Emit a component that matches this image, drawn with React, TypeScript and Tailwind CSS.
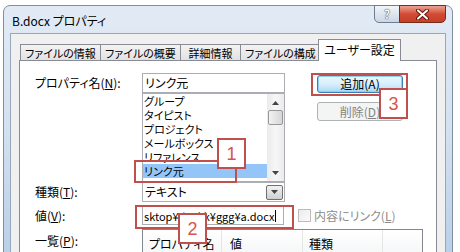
import React from "react";

const FONT = "font-['Noto_Sans_CJK_JP',sans-serif] [font-feature-settings:'palt']";
const RED = "border-[#c0504d]";

function Key({ k }: { k: string }) {
  return <span className="underline underline-offset-1">{k}</span>;
}

function Tab({ label, w, active }: { label: string; w: string; active?: boolean }) {
  if (active) {
    return (
      <div className={`${w} -ml-[3px] h-[22px] border-t border-l border-r border-[#898c95] bg-white flex items-start justify-center pt-[3px] text-[12px] leading-[14px] relative z-10`}>
        {label}
      </div>
    );
  }
  return (
    <div className={`${w} -ml-px first:ml-0 h-[16px] mb-px border-t border-l border-r border-[#898c95] bg-gradient-to-b from-[#f3f3f3] to-[#e2e2e2] flex items-center justify-center text-[11px] leading-[14px]`}>
      {label}
    </div>
  );
}

function Arrow({ up }: { up?: boolean }) {
  return (
    <svg width="7" height="4" viewBox="0 0 7 4">
      <path d={up ? "M0 4 L3.5 0 L7 4 Z" : "M0 0 L3.5 4 L7 0 Z"} fill="#444" />
    </svg>
  );
}

function CaptionButtons() {
  return (
    <div className="absolute top-[-1px] right-[6px] flex h-[18px]">
      <div className="w-[26px] h-full rounded-bl-[5px] border border-[#6e7d91] bg-gradient-to-b from-[#f1f5fa] to-[#cbd6e3] flex items-center justify-center text-[12px] font-bold text-white [text-shadow:0_0_1px_#333,0_0_1px_#333]">
        ?
      </div>
      <div className="w-[47px] h-full -ml-px rounded-br-[5px] border border-[#7a2a1c] bg-gradient-to-b from-[#e9a394] via-[#d24a33] to-[#c5402a] flex items-center justify-center">
        <svg width="13" height="11" viewBox="0 0 13 11">
          <path d="M2 1.5 L11 9.5 M11 1.5 L2 9.5" stroke="#5a1a10" strokeWidth="4" strokeLinecap="round" />
          <path d="M2 1.5 L11 9.5 M11 1.5 L2 9.5" stroke="#fff" strokeWidth="2" strokeLinecap="round" />
        </svg>
      </div>
    </div>
  );
}

const items = ["グループ", "タイピスト", "プロジェクト", "メールボックス", "リファレンス", "リンク元"];

export default function App() {
  return (
    <div className={`relative w-[460px] h-[252px] overflow-hidden bg-white text-black ${FONT}`}>
      <div className="relative ml-[3px] mt-[5px] w-[450px] h-[260px] rounded-t-[7px] border border-[#7e8ea3] bg-gradient-to-b from-[#e2ebf5] via-[#d3e0ef] to-[#b8cee8]">
        <div className="h-[27px] pl-[8px] pt-[7px] text-[12px] leading-[16px]">B.docx プロパティ</div>
        <CaptionButtons />

        <div className="ml-[6px] w-[436px] h-[240px] border border-[#97a6ba] bg-[#f0f0f0]">
          <div className="mt-[5px] pl-[9px] h-[22px] flex items-end relative z-10">
            <Tab label="ファイルの情報" w="w-[81px]" />
            <Tab label="ファイルの概要" w="w-[81px]" />
            <Tab label="詳細情報" w="w-[61px]" />
            <Tab label="ファイルの構成" w="w-[81px]" />
            <Tab label="ユーザー設定" w="w-[83px]" active />
          </div>

          <div className="-mt-px ml-[8px] w-[418px] h-[200px] border border-[#898c95] bg-white pt-[12px] pl-[15px] text-[12px] leading-[14px]">
            <div className="flex">
              <div className="w-[107px] h-[20px] flex items-center">
                プロパティ名(<Key k="N" />):
              </div>
              <div className="w-[143px] flex flex-col">
                <div className="h-[20px] border border-[#abadb3] flex items-center pl-[2px]">リンク元</div>
                <div className="h-[89px] border border-[#abadb3] flex">
                  <div className="flex-1 flex flex-col text-[11px]">
                    {items.map((t, i) => (
                      <div key={t} className={`h-[14px] pl-[1px] ${i === 5 ? "bg-[#94c5f8]" : ""}`}>
                        {t}
                      </div>
                    ))}
                  </div>
                  <div className="w-[17px] flex flex-col justify-between bg-gradient-to-r from-[#ebebeb] via-[#f6f6f6] to-[#ebebeb]">
                    <div className="h-[17px] flex items-center justify-center">
                      <Arrow up />
                    </div>
                    <div className="h-[15px] mx-[1px] -mt-[1px] border border-[#979797] rounded-[2px] bg-gradient-to-r from-[#f2f2f2] to-[#d6d6d6]" />
                    <div className="flex-1" />
                    <div className="h-[17px] flex items-center justify-center">
                      <Arrow />
                    </div>
                  </div>
                </div>
              </div>
              <div className="ml-[32px] w-[86px] flex flex-col">
                <div className="mt-[2px] h-[18px] rounded-[3px] border border-[#3c7fb1] bg-gradient-to-b from-[#eaf6fd] via-[#d9f0fc] to-[#a7d9f5] flex items-center justify-center shadow-[inset_0_0_0_1px_#8fd0f2]">
                  追加(A)
                </div>
                <div className="mt-[9px] h-[19px] rounded-[3px] border border-[#adb2b5] bg-[#f4f4f4] flex items-center justify-center text-[#838383]">
                  削除(<Key k="D" />)
                </div>
              </div>
            </div>

            <div className="flex items-center h-[20px]">
              <div className="w-[107px]">
                種類(<Key k="T" />):
              </div>
              <div className="w-[143px] h-[20px] border border-[#abadb3] flex items-center justify-between pl-[2px] pr-px">
                <span>テキスト</span>
                <div className="w-[17px] h-[15px] border border-[#707070] rounded-[2px] bg-gradient-to-b from-[#f2f2f2] to-[#cfcfcf] flex items-center justify-center">
                  <Arrow />
                </div>
              </div>
            </div>

            <div className="mt-[4px] flex items-center h-[19px]">
              <div className="w-[107px]">
                値(<Key k="V" />):
              </div>
              <div className="w-[142px] h-[19px] border border-[#abadb3] flex items-center pl-px whitespace-nowrap overflow-hidden text-[11px]">
                <span>sktop¥da¥kk¥ggg¥a.docx</span>
                <span className="w-px h-[12px] bg-black ml-px shrink-0" />
              </div>
              <div className="ml-[14px] w-[13px] h-[13px] border border-[#bcbcbc] bg-gradient-to-br from-[#ececec] to-[#fafafa]" />
              <div className="ml-[3px] text-[#8d8d8d]">
                内容にリンク(<Key k="L" />)
              </div>
            </div>

            <div className="mt-[4px] flex">
              <div className="w-[107px] pt-[5px]">
                一覧(<Key k="P" />):
              </div>
              <div className="w-[281px] h-[40px] border border-[#828790] flex items-start">
                <div className="w-[79px] h-[25px] border-r border-[#e5e5e5] pl-[6px] pt-[7px] bg-gradient-to-b from-white to-[#f5f6f7]">
                  プロパティ名
                </div>
                <div className="w-[81px] h-[25px] border-r border-[#e5e5e5] pl-[8px] pt-[7px] bg-gradient-to-b from-white to-[#f5f6f7]">
                  値
                </div>
                <div className="w-[80px] h-[25px] border-r border-[#e5e5e5] pl-[6px] pt-[7px] bg-gradient-to-b from-white to-[#f5f6f7]">
                  種類
                </div>
                <div className="flex-1 h-[25px] bg-gradient-to-b from-white to-[#f5f6f7]" />
              </div>
            </div>
          </div>
        </div>
      </div>

      {/* annotations */}
      <div className={`absolute left-[311px] top-[73px] w-[97px] h-[23px] border-2 ${RED}`} />
      <div className={`absolute left-[134px] top-[160px] w-[103px] h-[23px] border-2 ${RED}`} />
      <div className={`absolute left-[135px] top-[205px] w-[159px] h-[24px] border-2 ${RED}`} />
      <Callout n="1" pos="left-[217px] top-[138px]" />
      <Callout n="2" pos="left-[178px] top-[213px]" />
      <Callout n="3" pos="left-[379px] top-[88px]" />
    </div>
  );
}

function Callout({ n, pos }: { n: string; pos: string }) {
  return (
    <div className={`absolute ${pos} w-[29px] h-[31px] border-2 ${RED} bg-white flex items-center justify-center font-['Liberation_Sans',sans-serif] text-[18px] leading-none text-[#d9534a]`}>
      {n}
    </div>
  );
}
